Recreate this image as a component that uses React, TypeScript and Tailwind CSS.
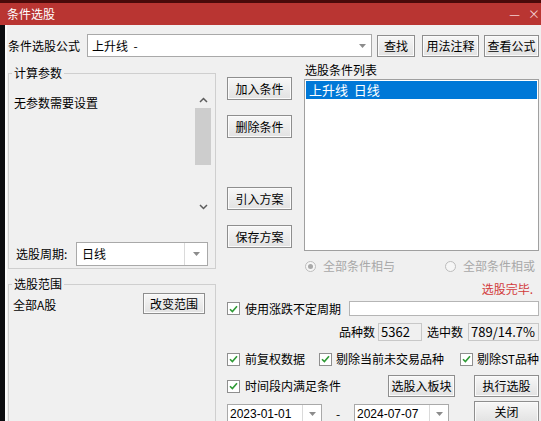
import React from "react";

const F = "font-['Noto_Sans_CJK_SC','Noto_Sans',sans-serif]";
const NUM = "font-['Liberation_Sans',Arial,sans-serif]";

function Arrow() {
  return (
    <svg width="7" height="4" viewBox="0 0 7 4">
      <path d="M0 0h7L3.5 4z" fill="#8c8c8c" />
    </svg>
  );
}

function Btn({ className, children }: { className: string; children: React.ReactNode }) {
  return (
    <div
      className={
        "flex items-center justify-center border border-[#8e8e8e] bg-gradient-to-b from-[#f7f7f7] to-[#e2e2e2] text-[12px] leading-none text-black shadow-[inset_0_0_0_1px_#fbfbfb] " +
        className
      }
    >
      {children}
    </div>
  );
}

function Check() {
  return (
    <div className="flex h-[13px] w-[13px] shrink-0 items-center justify-center border border-[#8f8f8f] bg-white">
      <svg width="9" height="8" viewBox="0 0 9 8">
        <path d="M1 4.2l2.4 2.4L8 1.2" stroke="#2e9a35" strokeWidth="1.6" fill="none" />
      </svg>
    </div>
  );
}

function Radio({ on }: { on?: boolean }) {
  return (
    <div className="flex h-[11px] w-[11px] shrink-0 items-center justify-center rounded-full border border-[#bdbdbd] bg-[#f6f6f6]">
      {on ? <div className="h-[5px] w-[5px] rounded-full bg-[#a9a9a9]" /> : null}
    </div>
  );
}

export default function App() {
  return (
    <div className={"h-[421px] w-[541px] overflow-hidden bg-[#f0f0f0] text-[12px] leading-[16px] text-black " + F}>
      {/* title bar */}
      <div className="h-[3px] bg-[#4a0a0a]" />
      <div className="flex h-[22px] items-center bg-[#b93532] pl-[7px] text-[12px] text-white">
        <span>条件选股</span>
        <span className="ml-auto mr-[8px] text-[#f4d0d0]">—</span>
        <span className="mr-[1px] text-[#f4d0d0]">×</span>
      </div>

      {/* body */}
      <div className="flex h-[396px]">
        <div className="w-[5px] shrink-0 bg-[#0c0d10]" />
        <div className="w-[2px] shrink-0 bg-[#fbfbfb]" />
        <div className="flex-1 pl-[1px]">
          {/* row 1 */}
          <div className="mt-[9px] flex h-[23px] items-center">
            <div className="w-[79px]">条件选股公式</div>
            <div className="flex h-[23px] w-[285px] items-center border border-[#a9a9a9] bg-white pl-[4px]">
              <span>上升线&nbsp;&nbsp;-</span>
              <div className="ml-auto flex w-[18px] justify-center">
                <Arrow />
              </div>
            </div>
            <Btn className="ml-[5px] h-[22px] w-[38px]">查找</Btn>
            <Btn className="ml-[7px] h-[22px] w-[57px]">用法注释</Btn>
            <Btn className="ml-[5px] h-[22px] w-[55px]">查看公式</Btn>
          </div>

          {/* main */}
          <div className="mt-[5px] flex">
            {/* left column */}
            <div className="w-[208px] shrink-0">
              <fieldset className="mt-[3px] h-[204px] border border-[#cfcfcf]">
                <legend className="ml-[3px] px-[2px] leading-[16px]">计算参数</legend>
                <div className="ml-[1px] mt-[10px] flex h-[124px] w-[201px]">
                  <div className="flex-1 pl-[4px] pt-[4px]">无参数需要设置</div>
                  <div className="flex w-[16px] flex-col">
                    <div className="flex h-[17px] items-center justify-center">
                      <svg width="9" height="6" viewBox="0 0 9 6">
                        <path d="M1 5l3.5-3.5L8 5" stroke="#5c5c5c" strokeWidth="1.5" fill="none" />
                      </svg>
                    </div>
                    <div className="h-[57px] bg-[#cdcdcd]" />
                    <div className="flex-1" />
                    <div className="flex h-[17px] items-center justify-center">
                      <svg width="9" height="6" viewBox="0 0 9 6">
                        <path d="M1 1l3.5 3.5L8 1" stroke="#5c5c5c" strokeWidth="1.5" fill="none" />
                      </svg>
                    </div>
                  </div>
                </div>
                <div className="mt-[27px] flex items-center pl-[7px]">
                  <div className="w-[60px]">选股周期:</div>
                  <div className="flex h-[24px] w-[132px] items-center border border-[#a9a9a9] bg-white pl-[5px]">
                    <span>日线</span>
                    <div className="ml-auto flex h-full w-[23px] items-center justify-center border-l border-[#dadada]">
                      <Arrow />
                    </div>
                  </div>
                </div>
              </fieldset>

              <fieldset className="mt-[7px] h-[160px] border border-[#cfcfcf]">
                <legend className="ml-[3px] px-[2px] leading-[16px]">选股范围</legend>
                <div className="mt-[1px] flex h-[21px] items-center justify-between pl-[4px] pr-[10px]">
                  <span className="mt-[3px]">全部A股</span>
                  <Btn className="h-[21px] w-[62px]">改变范围</Btn>
                </div>
              </fieldset>
            </div>

            {/* right area */}
            <div className="ml-[11px] w-[312px]">
              <div className="flex">
                <div className="flex w-[65px] flex-col">
                  <Btn className="mt-[15px] h-[23px] w-[65px]">加入条件</Btn>
                  <Btn className="mt-[15px] h-[23px] w-[65px]">删除条件</Btn>
                  <Btn className="mt-[49px] h-[23px] w-[65px]">引入方案</Btn>
                  <Btn className="mt-[15px] h-[23px] w-[65px]">保存方案</Btn>
                </div>
                <div className="ml-[12px] w-[235px]">
                  <div className="h-[16px] pl-[1px] leading-[16px]">选股条件列表</div>
                  <div className="mt-[1px] h-[172px] border border-[#a0a0a0] bg-white p-[1px]">
                    <div className="flex h-[18px] items-center bg-[#0078d7] pl-[3px] text-[13px] text-white">
                      上升线&nbsp;&nbsp;日线
                    </div>
                  </div>
                  <div className="mt-[7px] flex h-[16px] items-center text-[#a8a8a8]">
                    <div className="flex w-[141px] items-center pl-[1px]">
                      <Radio on />
                      <span className="ml-[7px]">全部条件相与</span>
                    </div>
                    <div className="flex items-center">
                      <Radio />
                      <span className="ml-[7px]">全部条件相或</span>
                    </div>
                  </div>
                </div>
              </div>

              <div className="mt-[7px] flex h-[16px] justify-end pr-[6px] text-[#d23a3a]">选股完毕.</div>

              <div className="mt-[4px] flex h-[15px] items-center">
                <Check />
                <span className="ml-[5px]">使用涨跌不定周期</span>
                <div className="ml-auto h-[15px] w-[190px] border border-[#b5b5b5] bg-white" />
              </div>

              <div className="mt-[7px] flex h-[18px] items-center justify-end">
                <span>品种数</span>
                <div className="ml-[3px] flex h-[18px] w-[44px] items-center border border-[#c8c8c8] pl-[2px] text-[13px]">5362</div>
                <span className="ml-[5px]">选中数</span>
                <div className="ml-[5px] flex h-[18px] w-[71px] items-center border border-[#c8c8c8] pl-[2px] text-[13px]">
                  789/14.7%
                </div>
              </div>

              <div className="mt-[10px] flex h-[16px] items-center">
                <div className="flex w-[92px] items-center">
                  <Check />
                  <span className="ml-[5px]">前复权数据</span>
                </div>
                <div className="flex w-[141px] items-center">
                  <Check />
                  <span className="ml-[4px]">剔除当前未交易品种</span>
                </div>
                <div className="flex items-center">
                  <Check />
                  <span className="ml-[4px]">剔除ST品种</span>
                </div>
              </div>

              <div className="mt-[8px] flex h-[22px] items-center">
                <Check />
                <span className="ml-[5px]">时间段内满足条件</span>
                <Btn className="ml-auto h-[22px] w-[67px]">选股入板块</Btn>
                <Btn className="ml-[19px] h-[22px] w-[65px]">执行选股</Btn>
              </div>

              <div className="mt-[4px] flex items-start">
                <div className="mt-[3px] flex h-[20px] w-[95px] items-center border border-[#a9a9a9] bg-white pl-[2px]">
                  <span className={NUM}>2023-01-01</span>
                  <div className="ml-auto flex h-full w-[19px] items-center justify-center border-l border-[#dadada]">
                    <Arrow />
                  </div>
                </div>
                <div className="mt-[5px] w-[32px] text-center">-</div>
                <div className="mt-[3px] flex h-[20px] w-[95px] items-center border border-[#a9a9a9] bg-white pl-[2px]">
                  <span className={NUM}>2024-07-07</span>
                  <div className="ml-auto flex h-full w-[19px] items-center justify-center border-l border-[#dadada]">
                    <Arrow />
                  </div>
                </div>
                <Btn className="ml-auto h-[22px] w-[65px]">关闭</Btn>
              </div>
            </div>
          </div>
        </div>
      </div>
    </div>
  );
}
